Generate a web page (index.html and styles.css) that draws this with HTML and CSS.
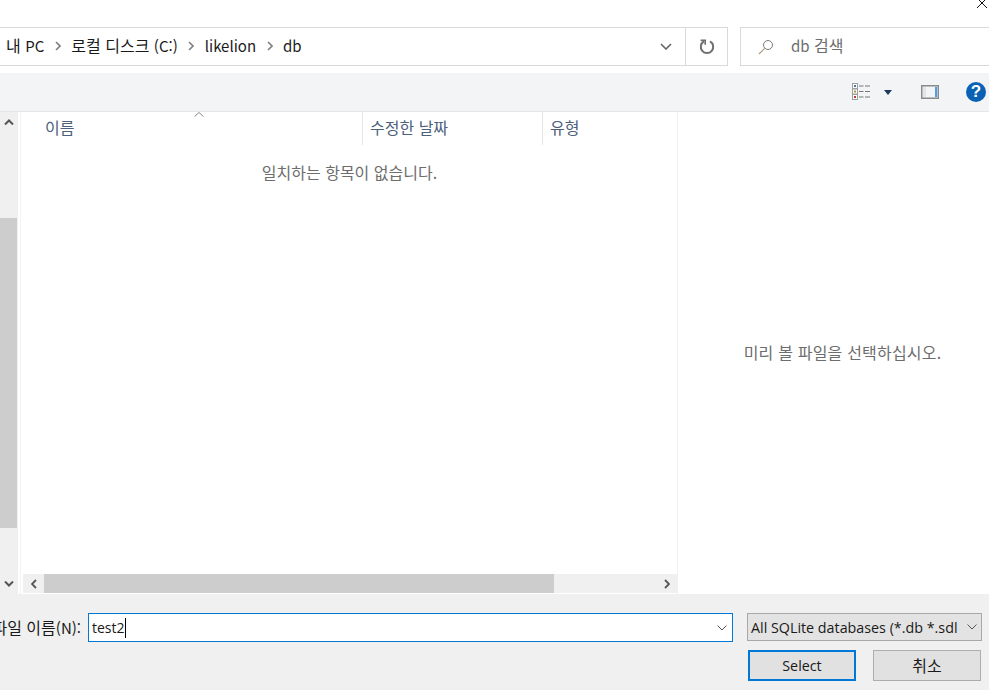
FILE: index.html
```html
<!DOCTYPE html>
<html lang="ko">
<head>
    <meta charset="UTF-8">
    <title>파일 선택</title>
    <link rel="stylesheet" href="styles.css">
</head>
<body>
    <div class="dialog">
        <div class="title-bar">
            <svg class="close-icon" width="12" height="12" viewBox="0 0 12 12"><path d="M1 0 L11 10 M11 0 L1 10" stroke="#111" stroke-width="1" fill="none"/></svg>
        </div>

        <div class="nav-row">
            <div class="address-bar">
                <div class="crumbs">
                    <span>내 <span class="en">PC</span></span>
                    <svg width="6" height="10" viewBox="0 0 6 10"><path d="M1 1 L5 5 L1 9" stroke="#808080" stroke-width="1.6" fill="none"/></svg>
                    <span>로컬 디스크 <span class="en">(C:)</span></span>
                    <svg width="6" height="10" viewBox="0 0 6 10"><path d="M1 1 L5 5 L1 9" stroke="#808080" stroke-width="1.6" fill="none"/></svg>
                    <span class="en">likelion</span>
                    <svg width="6" height="10" viewBox="0 0 6 10"><path d="M1 1 L5 5 L1 9" stroke="#808080" stroke-width="1.6" fill="none"/></svg>
                    <span class="en">db</span>
                </div>
                <div class="addr-btn dropdown-btn">
                    <svg width="12" height="7" viewBox="0 0 12 7"><path d="M1 1 L6 6 L11 1" stroke="#666" stroke-width="1.6" fill="none"/></svg>
                </div>
                <div class="addr-btn refresh-btn">
                    <svg width="16" height="16" viewBox="0 0 16 16"><path d="M5 2.4 A6.2 6.2 0 1 0 11 2.4" stroke="#707070" stroke-width="2" fill="none"/><path d="M1.6 1.4 L6.2 1.4 L6.2 5.8" stroke="#707070" stroke-width="1.6" fill="none"/></svg>
                </div>
            </div>
            <div class="search-box">
                <svg class="search-icon" width="16" height="16" viewBox="0 0 16 16"><circle cx="10" cy="6" r="4.5" stroke="#7a7a7a" stroke-width="1" fill="none"/><path d="M6.6 9.4 L1 15" stroke="#b09a80" stroke-width="1.2"/></svg>
                <span class="search-text"><span class="en">db</span> 검색</span>
            </div>
        </div>

        <div class="toolbar">
            <svg class="view-icon" width="19" height="18" viewBox="0 0 19 18">
                <rect x="0.5" y="0.5" width="5" height="5" fill="#fff" stroke="#a0a0a0"/>
                <rect x="0.5" y="6" width="5" height="5" fill="#fff" stroke="#a0a0a0"/>
                <rect x="0.5" y="11.5" width="5" height="5" fill="#fff" stroke="#a0a0a0"/>
                <rect x="2" y="2" width="2" height="2" fill="#3d7ab5"/>
                <rect x="2" y="7.5" width="2" height="2" fill="#a89a3a"/>
                <rect x="2" y="13" width="2" height="2" fill="#b5402c"/>
                <path d="M7 3 H11.5 M13 3 H18 M7 8.5 H11.5 M13 8.5 H18 M7 14 H11.5 M13 14 H18" stroke="#777" stroke-width="1"/>
            </svg>
            <svg class="caret-icon" width="8" height="5" viewBox="0 0 8 5"><path d="M0 0 H8 L4 5 Z" fill="#1f3a5f"/></svg>
            <svg class="pane-icon" width="18" height="14" viewBox="0 0 18 14">
                <rect x="0.75" y="0.75" width="16.5" height="12.5" fill="#f3f4f6" stroke="#8a8a8a" stroke-width="1.5"/>
                <rect x="2" y="2" width="3" height="10" fill="#e4e4e4"/>
                <rect x="14" y="2" width="2" height="10" fill="#4f9fe8"/>
            </svg>
            <div class="help-icon">?</div>
        </div>

        <div class="main">
            <div class="tree-scroll">
                <div class="scroll-arrow">
                    <svg width="10" height="6" viewBox="0 0 10 6"><path d="M1 5.5 L5 1.5 L9 5.5" stroke="#555" stroke-width="2" fill="none"/></svg>
                </div>
                <div class="tree-track">
                    <div class="tree-thumb"></div>
                </div>
                <div class="scroll-arrow">
                    <svg width="10" height="6" viewBox="0 0 10 6"><path d="M1 .5 L5 4.5 L9 .5" stroke="#555" stroke-width="2" fill="none"/></svg>
                </div>
            </div>

            <div class="file-list">
                <div class="list-header">
                    <svg class="sort-arrow" width="10" height="5" viewBox="0 0 10 5"><path d="M.5 4.5 L5 .5 L9.5 4.5" stroke="#888" stroke-width="1" fill="none"/></svg>
                    <div class="col col-name">이름</div>
                    <div class="col col-date">수정한 날짜</div>
                    <div class="col col-type">유형</div>
                </div>
                <div class="list-body">
                    <p class="empty-msg">일치하는 항목이 없습니다.</p>
                </div>
                <div class="h-scroll">
                    <div class="h-arrow">
                        <svg width="6" height="10" viewBox="0 0 6 10"><path d="M5 1 L1 5 L5 9" stroke="#555" stroke-width="1.8" fill="none"/></svg>
                    </div>
                    <div class="h-track">
                        <div class="h-thumb"></div>
                    </div>
                    <div class="h-arrow">
                        <svg width="6" height="10" viewBox="0 0 6 10"><path d="M1 1 L5 5 L1 9" stroke="#555" stroke-width="1.8" fill="none"/></svg>
                    </div>
                </div>
            </div>

            <div class="preview">미리 볼 파일을 선택하십시오.</div>
        </div>

        <div class="footer">
            <div class="file-row">
                <div class="file-label"><span>파일 이름<span class="en">(N):</span></span></div>
                <div class="file-input">
                    <span class="plain">test2</span>
                    <span class="caret-line"></span>
                    <svg class="input-arrow" width="10" height="6" viewBox="0 0 10 6"><path d="M.5 .5 L5 5 L9.5 .5" stroke="#555" stroke-width="1" fill="none"/></svg>
                </div>
                <div class="type-select">
                    <span class="plain">All SQLite databases (*.db *.sdl</span>
                    <svg width="10" height="6" viewBox="0 0 10 6"><path d="M.5 .5 L5 5 L9.5 .5" stroke="#555" stroke-width="1" fill="none"/></svg>
                </div>
            </div>
            <div class="button-row">
                <button class="btn btn-primary"><span class="plain">Select</span></button>
                <button class="btn">취소</button>
            </div>
        </div>
    </div>
</body>
</html>
```

FILE: styles.css
```css
* {
    margin: 0;
    padding: 0;
    box-sizing: border-box;
}

html, body {
    width: 989px;
    height: 690px;
    overflow: hidden;
}

body {
    font-family: "Noto Sans CJK KR", "Open Sans", sans-serif;
    font-size: 16px;
    color: #1a1a1a;
    background: #ffffff;
}

/* latin runs next to hangul are a size smaller */
.en {
    font-size: 15px;
    white-space: nowrap;
}

/* latin-only controls */
.plain {
    font-family: "Open Sans", "Liberation Sans", sans-serif;
    font-size: 14.3px;
    white-space: nowrap;
}

.dialog {
    display: flex;
    flex-direction: column;
    height: 690px;
}

.title-bar {
    height: 27px;
    display: flex;
    justify-content: flex-end;
    padding-right: 1px;
}

.close-icon {
    margin-top: -2px;
}

.nav-row {
    height: 39px;
    display: flex;
    gap: 12px;
}

.address-bar {
    width: 728px;
    display: flex;
    border: 1px solid #d9d9d9;
    border-left: 0;
}

.crumbs {
    flex: 1;
    display: flex;
    align-items: center;
    gap: 10.5px;
    padding-left: 6px;
    line-height: 36px;
    padding-bottom: 2px;
}

.addr-btn {
    display: flex;
    align-items: center;
    justify-content: center;
}

.dropdown-btn {
    width: 38px;
}

.refresh-btn {
    width: 42px;
    border-left: 1px solid #d9d9d9;
}

.search-box {
    flex: 1;
    display: flex;
    align-items: center;
    border: 1px solid #d9d9d9;
    border-right: 0;
    padding-left: 17px;
    color: #6d6d6d;
}

.search-icon {
    margin-right: 17px;
}

.search-text {
    line-height: 34px;
    padding-bottom: 3px;
}

.toolbar {
    height: 39px;
    margin-top: 7px;
    background: #f3f4f6;
    border-bottom: 1px solid #e6e6e6;
    display: flex;
    align-items: center;
    justify-content: flex-end;
}

.view-icon {
    margin-right: 13px;
}

.caret-icon {
    margin-right: 29px;
}

.pane-icon {
    margin-right: 27px;
}

.help-icon {
    width: 20px;
    height: 20px;
    margin-right: 3px;
    border-radius: 50%;
    background: #0a62b5;
    color: #ffffff;
    font-family: "Liberation Sans", sans-serif;
    font-size: 17px;
    font-weight: 700;
    line-height: 20px;
    text-align: center;
}

.main {
    flex: 1;
    display: flex;
    min-height: 0;
}

.tree-scroll {
    width: 18px;
    background: #f0f0f0;
    display: flex;
    flex-direction: column;
}

.scroll-arrow {
    height: 20px;
    display: flex;
    align-items: center;
    justify-content: center;
    flex-shrink: 0;
}

.tree-track {
    flex: 1;
    padding: 86px 1px 46px 0;
    display: flex;
}

.tree-thumb {
    flex: 1;
    background: #cdcdcd;
}

.file-list {
    width: 658px;
    margin-left: 2px;
    border-left: 1px solid #f3f3f3;
    border-right: 1px solid #f0f0f0;
    display: flex;
    flex-direction: column;
}

.list-header {
    position: relative;
    height: 33px;
    display: flex;
    color: #4c607a;
    flex-shrink: 0;
}

.sort-arrow {
    position: absolute;
    left: 173px;
    top: 0;
}

.col {
    padding-top: 4px;
    line-height: 22px;
}

.col-name {
    width: 341px;
    padding-left: 24px;
}

.col-date {
    width: 180px;
    padding-left: 7px;
    border-left: 1px solid #e5e5e5;
}

.col-type {
    padding-left: 7px;
    border-left: 1px solid #e5e5e5;
    flex: 1;
}

.list-body {
    flex: 1;
    padding-top: 16px;
}

.empty-msg {
    text-align: center;
    color: #6d6d6d;
    line-height: 22px;
    padding-left: 1px;
}

.h-scroll {
    height: 19px;
    margin-bottom: 1px;
    margin-left: 2px;
    background: #f0f0f0;
    display: flex;
    flex-shrink: 0;
}

.h-arrow {
    width: 21px;
    display: flex;
    align-items: center;
    justify-content: center;
    flex-shrink: 0;
}

.h-track {
    flex: 1;
    display: flex;
}

.h-thumb {
    width: 510px;
    background: #cdcdcd;
}

.preview {
    flex: 1;
    display: flex;
    align-items: center;
    justify-content: center;
    padding-left: 18px;
    padding-bottom: 3px;
    color: #6d6d6d;
    white-space: nowrap;
    letter-spacing: 0.2px;
}

.footer {
    height: 96px;
    background: #f0f0f0;
    padding-top: 19px;
    flex-shrink: 0;
}

.file-row {
    display: flex;
    height: 29px;
}

.file-label {
    width: 81px;
    overflow: hidden;
    white-space: nowrap;
    display: flex;
    justify-content: flex-end;
    line-height: 28px;
}

.file-input {
    width: 645px;
    margin-left: 7px;
    background: #ffffff;
    border: 1px solid #0078d7;
    display: flex;
    align-items: center;
    padding-left: 3px;
    padding-right: 5px;
}

.file-input .plain {
    font-size: 14px;
}

.caret-line {
    width: 1px;
    height: 20px;
    background: #000000;
}

.input-arrow {
    margin-left: auto;
}

.type-select {
    width: 235px;
    height: 28px;
    margin-left: 14px;
    background: #e3e3e3;
    border: 1px solid #a8a8a8;
    display: flex;
    align-items: center;
    justify-content: space-between;
    padding-left: 3px;
    padding-right: 4px;
}

.button-row {
    display: flex;
    justify-content: flex-end;
    gap: 17px;
    margin-top: 8px;
    padding-right: 8px;
}

.btn {
    width: 108px;
    height: 31px;
    padding-bottom: 2px;
    background: #e1e1e1;
    border: 1px solid #adadad;
    font-family: "Noto Sans CJK KR", sans-serif;
    font-size: 16px;
    line-height: 24px;
    color: #1a1a1a;
}

.btn-primary {
    border: 2px solid #0078d7;
    padding-bottom: 3px;
}
```
